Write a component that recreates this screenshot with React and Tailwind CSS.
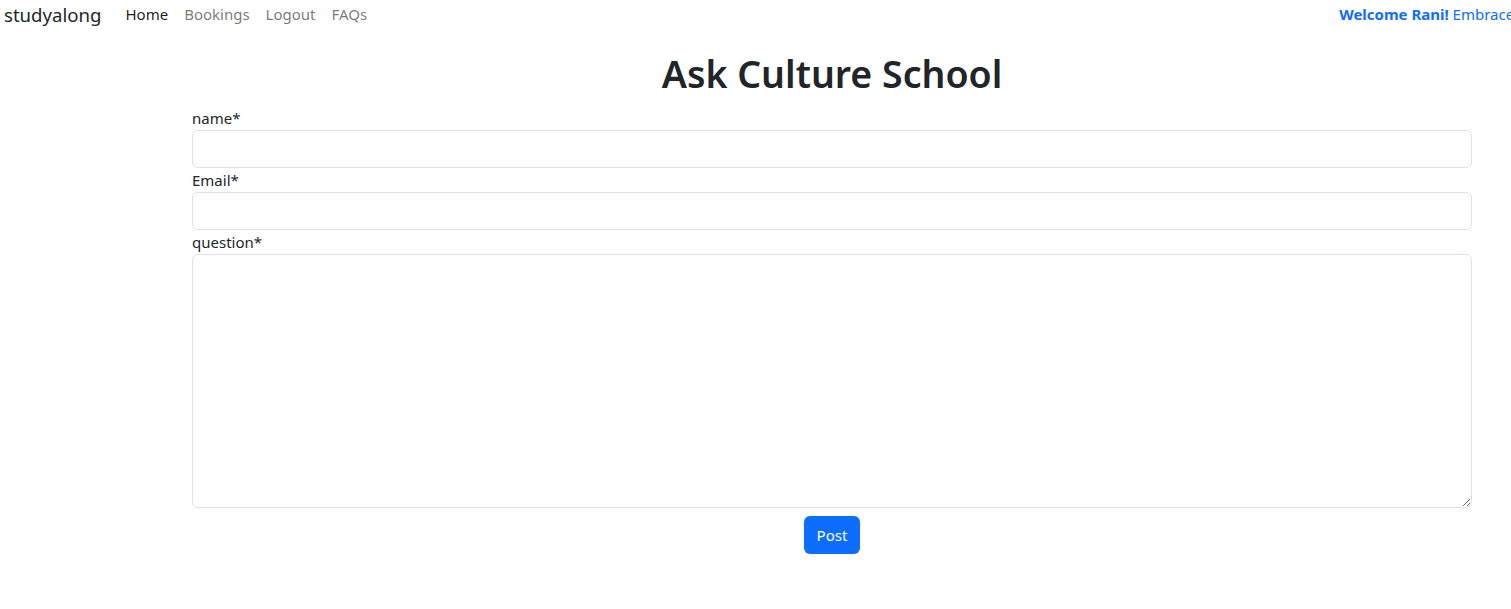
import { useState } from "react";

const App = () => {
  const [name, setName] = useState("");
  const [email, setEmail] = useState("");
  const [question, setQuestion] = useState("");

  return (
    <div className="min-h-screen bg-white text-[#212529] overflow-hidden font-['Noto_Sans',_sans-serif]">
      <nav className="flex items-center h-[29px] whitespace-nowrap">
        <a className="pl-1 text-[18.6px] text-[#212529] mr-[16px] leading-[29px]">studyalong</a>
        <ul className="flex text-[15px] leading-[29px]">
          <li className="px-2 text-black/90">Home</li>
          <li className="px-2 text-black/55">Bookings</li>
          <li className="px-2 text-black/55">Logout</li>
          <li className="px-2 text-black/55">FAQs</li>
        </ul>
        <div className="pl-[964px] text-[15px] text-[#0d6efd] flex-shrink-0 leading-[29px]">
          <span className="font-bold">Welcome Rani!</span> Embrace your culture with us
        </div>
      </nav>

      <div className="ml-[192px] w-[1280px]">
        <h1 className="text-center text-[37.5px] font-semibold leading-[48px] mt-[21px] mb-2">
          Ask Culture School
        </h1>
        <form className="flex flex-col" onSubmit={(e) => e.preventDefault()}>
          <label className="text-[15px] leading-6">name*</label>
          <input
            value={name}
            onChange={(e) => setName(e.target.value)}
            className="h-[38px] w-full border border-[#dee2e6] rounded-[6px] px-3"
          />
          <label className="text-[15px] leading-6">Email*</label>
          <input
            type="email"
            value={email}
            onChange={(e) => setEmail(e.target.value)}
            className="h-[38px] w-full border border-[#dee2e6] rounded-[6px] px-3"
          />
          <label className="text-[15px] leading-6">question*</label>
          <textarea
            value={question}
            onChange={(e) => setQuestion(e.target.value)}
            className="h-[254px] w-full border border-[#dee2e6] rounded-[6px] px-3 py-1.5 block"
          />
          <div className="flex justify-center mt-2">
            <button
              type="submit"
              className="h-[38px] w-[56px] bg-[#0d6efd] text-white rounded-[6px] text-[15px]"
            >
              Post
            </button>
          </div>
        </form>
      </div>
    </div>
  );
};

export default App;
